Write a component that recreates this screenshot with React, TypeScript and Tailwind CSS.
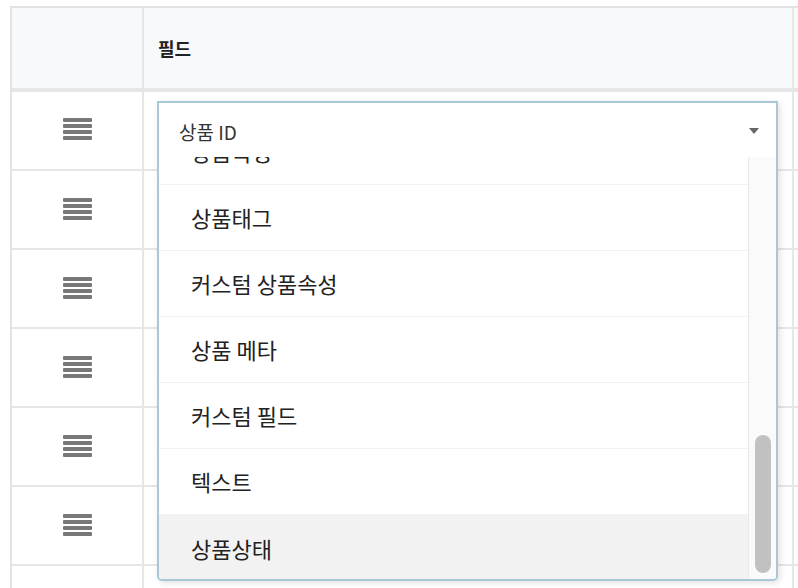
import React from 'react';

const OPTIONS = ['상품속성', '상품태그', '커스텀 상품속성', '상품 메타', '커스텀 필드', '텍스트', '상품상태'];

const FONT = { fontFamily: '"Noto Sans CJK KR", "Noto Sans", sans-serif' };

function DragHandle() {
  return (
    <div className="flex flex-col gap-[2px] w-[29px]">
      {[0, 1, 2, 3].map(i => (
        <span key={i} className="block h-[4px] w-full bg-[#787878] rounded-[1px]" />
      ))}
    </div>
  );
}

function Row({ first }: { first?: boolean }) {
  return (
    <div className="flex h-[79px] border-b-2 border-[#e6e6e6]">
      <div className="w-[132px] shrink-0 border-r-2 border-[#e6e6e6] flex items-center justify-center">
        <div className={first ? '-mt-[4px]' : '-mt-[2px]'}>
          <DragHandle />
        </div>
      </div>
      <div className="w-[650px] shrink-0 border-r-2 border-[#e6e6e6]" />
      <div className="flex-1" />
    </div>
  );
}

export default function App() {
  return (
    <div className="relative w-[798px] h-[588px] overflow-hidden bg-white" style={FONT}>
      <div className="ml-[10px] mt-[6px] border-t-2 border-l-2 border-[#e3e3e3]">
        <div className="flex h-[84px] border-b-4 border-[#e6e6e6] bg-[#f8f9fa]">
          <div className="w-[132px] shrink-0 border-r-2 border-[#e6e6e6]" />
          <div className="w-[650px] shrink-0 border-r-2 border-[#e6e6e6] flex items-center pl-[14px]">
            <span className="text-[18px] font-bold text-[#222]">필드</span>
          </div>
          <div className="flex-1" />
        </div>
        {[0, 1, 2, 3, 4, 5, 6].map(i => (
          <Row key={i} first={i === 0} />
        ))}
      </div>

      {/* open select */}
      <div className="absolute left-[157px] top-[101px] w-[621px] h-[480px] border-2 border-[#a9c7d6] rounded-b-[5px] bg-white shadow-[2px_2px_6px_rgba(0,0,0,0.12)] flex flex-col overflow-hidden">
        <div className="h-[54px] shrink-0 flex items-center justify-between pl-[20px] pr-[17px]">
          <span className="text-[19px] text-[#333] mt-[4px]">상품 ID</span>
          <span className="w-0 h-0 border-l-[5px] border-r-[5px] border-t-[6px] border-l-transparent border-r-transparent border-t-[#666] mt-[2px]" />
        </div>
        <div className="flex flex-1 min-h-0">
          <div className="flex-1 overflow-hidden">
            <div className="-mt-[38px]">
              {OPTIONS.map((o, i) => (
                <div
                  key={o}
                  className={`h-[66px] flex items-center pl-[32px] text-[22px] text-[#222] ${
                    i === OPTIONS.length - 1 ? 'bg-[#f2f2f2]' : 'border-b border-[#f3f3f3]'
                  }`}
                >
                  {o}
                </div>
              ))}
            </div>
          </div>
          <div className="w-[28px] shrink-0 border-l border-[#e8e8e8] bg-[#fafafa] relative">
            <div className="absolute left-[6px] top-[278px] w-[16px] h-[138px] rounded-full bg-[#c1c1c1]" />
          </div>
        </div>
      </div>
    </div>
  );
}
